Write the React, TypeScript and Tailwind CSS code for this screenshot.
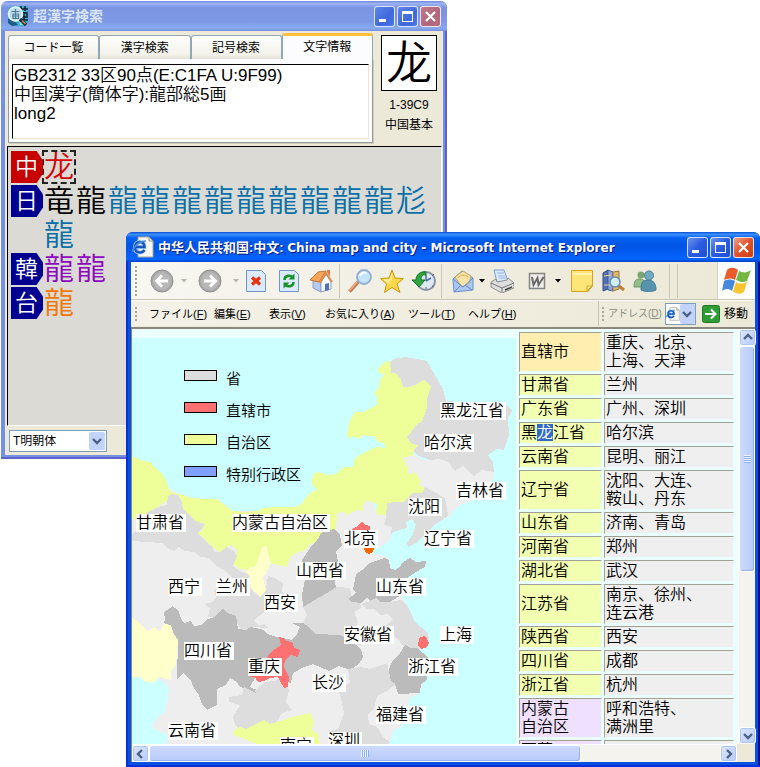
import type { ReactNode } from "react";

const fontJa = "[font-family:'Liberation_Sans','Noto_Sans_CJK_JP',sans-serif]";
const fontZh = "[font-family:'Liberation_Sans','Noto_Sans_CJK_SC',sans-serif]";

/* ---------- window chrome ---------- */

function CaptionButton({ label, tone, children }: { label: string; tone: string; children: ReactNode }) {
  return (
    <button aria-label={label} className={`flex h-[21px] w-[21px] items-center justify-center rounded-[3px] border border-white/80 ${tone}`}>
      <svg viewBox="0 0 19 19" className="h-[19px] w-[19px]" fill="none" stroke="#fff" shapeRendering="crispEdges">
        {children}
      </svg>
    </button>
  );
}

function CaptionButtons({ active }: { active: boolean }) {
  const blue = active ? "bg-[linear-gradient(135deg,#6f95f0,#2a5be0_50%,#1f4fd6)]" : "bg-[linear-gradient(135deg,#5f86e8,#3f68dd_60%,#4a78ea)]";
  const red = active ? "bg-[linear-gradient(135deg,#f0a088,#e0512b_50%,#c83c14)]" : "bg-[linear-gradient(135deg,#c07a8c,#b2667a_60%,#b86f80)]";
  return (
    <div className="flex gap-[2px]">
      <CaptionButton label="最小化" tone={blue}>
        <path d="M4 13.5h7" strokeWidth="3" />
      </CaptionButton>
      <CaptionButton label="最大化" tone={blue}>
        <path d="M4.500 5.500h10v9h-10z" />
        <path d="M4 5h11" strokeWidth="3" />
      </CaptionButton>
      <CaptionButton label="閉じる" tone={red}>
        <path d="M5 5l9 9M14 5l-9 9" strokeWidth="2.200" shapeRendering="auto" />
      </CaptionButton>
    </div>
  );
}

/* ---------- kanji search window ---------- */

function KanjiAppIcon() {
  return (
    <svg viewBox="0 0 22 22" className="h-[22px] w-[22px]" fill="none">
      <path d="M1 4l4-3h16v17l-5 3H5l-4-4z" fill="#3fa9c8" />
      <path d="M1 14l6 1 4 5-6 1-4-3z" fill="#1d5d86" />
      <path d="M14 1v5M18 1v5M12 4h9M13 8h7v4h-7zM17 7v8M12 15h9" stroke="#0e2230" strokeWidth="1.500" />
      <path d="M12 17h5v3h-4z" fill="#7fe0f0" />
      <circle cx="8.500" cy="9" r="7" fill="#bcdcea" stroke="#e8f4fa" strokeWidth="1.500" />
      <path d="M4.500 6.500h8M6 9h5.500v4.500H6zM8.500 4v9M5 11h7" stroke="#4a7d99" strokeWidth="1.100" />
      <path d="M13 14l6 6" stroke="#1d2a35" strokeWidth="3.200" />
      <path d="M15 15.500l3.500 3.500" stroke="#d98a50" strokeWidth="1.400" />
    </svg>
  );
}

const tabs = ["コード一覧", "漢字検索", "記号検索", "文字情報"];

function Tab({ label, selected }: { label: string; selected: boolean }) {
  return selected ? (
    <button role="tab" aria-selected="true" className="h-[26px] flex-1 rounded-t-[3px] border border-b-0 border-t-[3px] border-[#91a7b4] border-t-[#ffc03c] bg-[#fcfcfe] pb-[2px] text-[12px] leading-none">
      {label}
    </button>
  ) : (
    <button role="tab" aria-selected="false" className="h-6 flex-1 rounded-t-[3px] border border-b-0 border-[#91a7b4] bg-[linear-gradient(#fefefe,#f3f2ea_80%,#e5e2d6)] text-[12px] leading-none">
      {label}
    </button>
  );
}

const groups = [
  { region: "中", badge: "bg-[#c80000]", glyphs: [{ chars: "龙", tone: "text-[#d00808] outline-2 -outline-offset-1 outline-dashed outline-[#222]" }] },
  {
    region: "日",
    badge: "bg-[#000090]",
    glyphs: [
      { chars: "竜龍", tone: "text-black" },
      { chars: "龍龍龍龍龍龍龍龍龍尨龍", tone: "text-[#0870a8]" },
    ],
  },
  { region: "韓", badge: "bg-[#000090]", glyphs: [{ chars: "龍龍", tone: "text-[#8c08c0]" }] },
  { region: "台", badge: "bg-[#000090]", glyphs: [{ chars: "龍", tone: "text-[#f07808]" }] },
];

function KanjiWindow() {
  return (
    <section aria-label="超漢字検索" className={`absolute left-px top-px flex h-[458px] w-[446px] flex-col rounded-t-[7px] bg-[#7590e2] px-1 pb-1 shadow-[inset_-2px_-2px_0_#5f64cc] ${fontJa}`}>
      <header className="-mx-1 flex h-[30px] shrink-0 items-center rounded-t-[7px] bg-[linear-gradient(#6f86dc,#9db4f2_8%,#7b94e2_22%,#7d99e6_70%,#87abf0_90%,#7a90dc)] pl-[6px] pr-[6px]">
        <KanjiAppIcon />
        <h1 className="ml-1 flex-1 text-[14px] font-bold leading-none text-[#d8e4f8]">超漢字検索</h1>
        <CaptionButtons active={false} />
      </header>
      <div className="flex min-h-0 flex-1 flex-col bg-[#ece9d8]">
        <div className="flex h-[115px] shrink-0 gap-[7px] pl-[3px] pr-[5px] pt-[2px]">
          <div className="flex min-w-0 flex-1 flex-col">
            <div role="tablist" className="flex h-[26px] items-end">
              {tabs.map((t, i) => (
                <Tab key={t} label={t} selected={i === 3} />
              ))}
            </div>
            <div className="h-[84px] border border-t-0 border-[#919b9c] bg-[#fcfcfe] px-[3px] pt-[5px] shadow-[1px_1px_0_#d0cec0]">
              <textarea
                aria-label="文字情報"
                readOnly
                className="block h-[75px] w-full resize-none overflow-hidden border border-[#e8e4d0] border-l-black border-t-black bg-white pl-px pt-px text-[17px] font-[350] leading-[19px] outline-none"
                defaultValue={"GB2312 33区90点(E:C1FA U:9F99)\n中国漢字(簡体字):龍部総5画\nlong2"}
              />
            </div>
          </div>
          <div className="flex w-[58px] shrink-0 flex-col items-center pt-[2px] text-[12px]">
            <div className={`flex h-14 w-14 items-center justify-center border border-black bg-white text-[46px] font-[350] leading-none ${fontZh}`}>龙</div>
            <div className="mt-1 leading-5">1-39C9</div>
            <div className="leading-5">中国基本</div>
          </div>
        </div>
        <div className="mx-[2px] mr-px flex-1 border border-black border-b-white border-r-white bg-[#dcdad5] pl-[3px] pt-1">
          {groups.map((g) => (
            <div key={g.region} className="flex">
              <div className={`flex h-8 w-8 shrink-0 items-center pl-1 text-[23px] font-[350] leading-none text-white [clip-path:polygon(0_0,80%_0,100%_30%,100%_70%,80%_100%,0_100%)] ${g.badge}`}>{g.region}</div>
              <div className="flex flex-wrap">
                {g.glyphs.flatMap((set) =>
                  [...set.chars].map((c, i) => (
                    <span key={set.tone + i} className={`mb-[2px] flex h-8 w-8 items-center justify-center text-[30px] font-[350] leading-none ${set.tone}`}>
                      {c}
                    </span>
                  )),
                )}
              </div>
            </div>
          ))}
        </div>
        <div className="flex h-[29px] shrink-0 items-start pl-1 pt-1">
          <span className="relative flex">
            <select aria-label="書体" className="h-[22px] w-[98px] appearance-none border border-[#7f9db9] bg-white pl-[3px] text-[12px] leading-none">
              <option>T明朝体</option>
            </select>
            <span className="pointer-events-none absolute right-[2px] top-[2px] flex h-[18px] w-4 items-center justify-center rounded-[2px] bg-[#c2d4fc]">
              <Chevron dir="down" />
            </span>
          </span>
        </div>
      </div>
    </section>
  );
}

/* ---------- scroll bars ---------- */

function Chevron({ dir }: { dir: "up" | "down" | "left" | "right" }) {
  const paths = { up: "M1 6l4-4 4 4", down: "M1 3l4 4 4-4", left: "M6 1L2 5l4 4", right: "M3 1l4 4-4 4" };
  return (
    <svg viewBox="0 0 10 10" className="h-[10px] w-[10px]" fill="none" stroke="#4d6185" strokeWidth="2.400">
      <path d={paths[dir]} />
    </svg>
  );
}

function ScrollButton({ dir, label }: { dir: "up" | "down" | "left" | "right"; label: string }) {
  return (
    <button aria-label={label} className="flex h-[17px] w-[17px] shrink-0 items-center justify-center rounded-[3px] border border-white bg-[linear-gradient(135deg,#dce6fe,#b8ccfa)] shadow-[inset_0_0_0_1px_#b0c4f0]">
      <Chevron dir={dir} />
    </button>
  );
}

/* ---------- toolbar ---------- */

function Grip({ className }: { className: string }) {
  return <span className={`w-[2px] shrink-0 bg-[repeating-linear-gradient(#a8a698_0_2px,transparent_2px_4px)] ${className}`} />;
}

function Cell({ w, label, children }: { w: string; label: string; children: ReactNode }) {
  return (
    <button aria-label={label} className={`flex h-full shrink-0 items-center justify-center ${w}`}>
      <svg viewBox="0 0 24 24" className="h-6 w-6 shrink-0" fill="none">
        {children}
      </svg>
    </button>
  );
}

function Caret({ tone }: { tone: string }) {
  return (
    <svg viewBox="0 0 6 4" className={`h-1 w-[6px] shrink-0 ${tone}`} fill="currentColor">
      <path d="M0 0h6L3 3.500z" />
    </svg>
  );
}

function Sep() {
  return <span className="ml-[2px] mr-[5px] h-[34px] w-px shrink-0 bg-[#c9c5b2]" />;
}

function Page() {
  return <path d="M2.500 1.500h15l4 4v17h-19z" fill="#dceafd" stroke="#7295cc" />;
}

function Toolbar() {
  return (
    <div role="toolbar" aria-label="標準のボタン" className="flex h-[38px] shrink-0 border-b border-[#c8c4b0] bg-[linear-gradient(90deg,#f8f7f2,#f0ede0_50%,#ece9d8)]">
      <div className="flex flex-1 items-center overflow-hidden">
        <Grip className="ml-1 mr-[6px] h-[30px]" />
        <Cell w="w-[38px]" label="戻る">
          <circle cx="12" cy="12" r="11" fill="#a9a9a9" stroke="#929292" />
          <circle cx="12" cy="12" r="9" fill="#b8b8b8" />
          <path d="M18 12H8M12 6.500L6.500 12l5.500 5.500" stroke="#fff" strokeWidth="2.800" />
        </Cell>
        <Caret tone="text-[#b8b5a8]" />
        <Cell w="w-[46px]" label="進む">
          <circle cx="12" cy="12" r="11" fill="#a9a9a9" stroke="#929292" />
          <circle cx="12" cy="12" r="9" fill="#b8b8b8" />
          <path d="M6 12h10M12 6.500l5.500 5.500-5.500 5.500" stroke="#fff" strokeWidth="2.800" />
        </Cell>
        <Caret tone="text-[#b8b5a8]" />
        <Cell w="w-[34px]" label="中止">
          <Page />
          <path d="M8 8.500l8 7M16 8.500l-8 7" stroke="#e8320a" strokeWidth="3.200" />
        </Cell>
        <Cell w="w-8" label="更新">
          <Page />
          <path d="M7.500 11c0-5 6-5 8-3M16.500 13c0 5-6 5-8 3" stroke="#189228" strokeWidth="2.600" />
          <path d="M17.500 4.500v6h-6zM6.500 19.500v-6h6z" fill="#189228" />
        </Cell>
        <Cell w="w-8" label="ホーム">
          <path d="M4 11v8l8 4V13z" fill="#b4cbf2" stroke="#8ba0cb" />
          <path d="M12 13l5-8 5 8v7l-10 3z" fill="#f6f9fe" stroke="#8ba0cb" />
          <path d="M1 11l8-8 8-1-7 11z" fill="#f3a65a" stroke="#c5763a" />
          <path d="M11 14l6-10 6 9" stroke="#e08a48" strokeWidth="2" />
          <path d="M18 3V1h3v7" fill="#e07a48" />
          <path d="M16 15l4-1v7l-4 1z" fill="#4b72bb" />
        </Cell>
        <Sep />
        <Cell w="w-[30px]" label="検索">
          <path d="M1.500 22.500l9-10" stroke="#c47a52" strokeWidth="3.600" />
          <path d="M1.500 21.500l8-9" stroke="#eeb58d" strokeWidth="1.200" />
          <circle cx="16" cy="8" r="7" fill="#c5e5fb" stroke="#91add8" strokeWidth="1.800" />
          <path d="M12 7c1-3 4-4 6-3" stroke="#fff" strokeWidth="2" />
        </Cell>
        <Cell w="w-[34px]" label="お気に入り">
          <path d="M12 1l3 8 8.500.5-6.500 5.500 3 8.500-8-5-7.500 5 2-8.500L.5 9.500 9 9z" fill="#fcd748" stroke="#c6960c" />
          <path d="M12 5l-1 6-6 0 5 3" stroke="#fff6b8" strokeWidth="1.200" />
        </Cell>
        <Cell w="w-[30px]" label="履歴">
          <circle cx="14" cy="12" r="9" fill="#dfe7ef" stroke="#8793a4" strokeWidth="2" />
          <path d="M14 12V6M14 12l5-3" stroke="#4671ad" strokeWidth="1.500" />
          <path d="M22 5l-2 2M22 18l-2-1M14 20v-2" stroke="#667" />
          <path d="M14 3C8 2 4 6 4 11H0l7 7 6-7H9c0-4 2-6 5-5z" fill="#31a33f" stroke="#16772b" />
        </Cell>
        <Sep />
        <Cell w="w-8" label="メール">
          <path d="M2 10l9-8 11 7v12L3 23z" fill="#a8c9f2" stroke="#698dce" />
          <path d="M4 8l8-6 8 5-2 7-7 4z" fill="#f8e4a8" stroke="#c5a35c" />
          <path d="M7 9c3-4 7-3 10-1" stroke="#dba546" />
          <path d="M2 10l10 8 10-9M3 23l7-7M21 21l-7-5" stroke="#678acb" />
        </Cell>
        <Caret tone="text-black" />
        <Cell w="w-[34px]" label="印刷">
          <path d="M4 1h10l4 11-11 1z" fill="#dae9fc" stroke="#7b9ed6" />
          <path d="M7 4h7M8 7h7M9 9h7" stroke="#96b4e0" />
          <path d="M1 13l5-3 1 3 10-2 1-2 6 5v5l-12 5-11-6z" fill="#dedede" stroke="#8e8e8e" />
          <path d="M1 14l11 5 12-5M12 19v4" stroke="#777" />
          <path d="M15 21l7-3" stroke="#444" strokeWidth="1.500" />
        </Cell>
        <Cell w="w-9" label="編集">
          <path d="M4.500 4.500h15v15h-15z" fill="#eeeeec" stroke="#858585" strokeWidth="1.500" />
          <path d="M7 8l1.500 8 4-7 1 7 5-8" stroke="#696969" strokeWidth="2" />
        </Cell>
        <Caret tone="text-black" />
        <Cell w="w-[42px]" label="ディスカッション">
          <path d="M1.500 1.500h21v16l-5 5h-16z" fill="#ffe577" stroke="#d5a31c" />
          <path d="M2 5h20" stroke="#fff2ad" strokeWidth="2" />
          <path d="M17 22v-5h5z" fill="#fff5b8" stroke="#d5a31c" />
        </Cell>
        <Cell w="w-5" label="リサーチ">
          <path d="M2 4l5-3v19l-5 2z" fill="#5371b6" stroke="#364e87" />
          <path d="M7 1l5 2v19l-5-1z" fill="#90a6da" stroke="#4d659d" />
          <path d="M12 3l6-1v18l-6 2z" fill="#dcb968" stroke="#98773e" />
          <path d="M3 7l7-1M3 16l6 0" stroke="#eed489" />
          <circle cx="14" cy="13" r="5" fill="#d2f0fc" stroke="#678db9" strokeWidth="1.500" />
          <path d="M18 17l5 4" stroke="#c17d36" strokeWidth="3" />
        </Cell>
        <Cell w="w-11" label="Messenger">
          <path d="M1 18c0-7 2-8 6-8s6 3 6 8z" fill="#92bd87" stroke="#6c9968" />
          <circle cx="8" cy="6" r="3.500" fill="#78a672" />
          <path d="M8 21c0-8 2-10 7-10s8 3 8 10c-4 2-11 2-15 0z" fill="#5893ae" stroke="#437c97" />
          <circle cx="16" cy="6.500" r="4.500" fill="#6eabc0" stroke="#467f98" />
        </Cell>
        <Sep />
        <Sep />
      </div>
      <div className="flex w-[38px] shrink-0 items-center justify-center border-l border-[#d8d4c4] bg-white">
        <svg viewBox="0 0 30 28" className="h-7 w-[30px]">
          <path d="M5 3c3-3 7-3 11 0l-3 10c-3-2-7-2-11 0z" fill="#ea5b2c" />
          <path d="M17 4c4 2 8 2 12-1l-4 11c-4 2-7 1-11-1z" fill="#74b843" />
          <path d="M2 14c4-2 7-2 11 0l-3 10c-4-3-7-2-10 0z" fill="#4487dc" />
          <path d="M14 15c3 2 7 2 11 0l-3 10c-4 3-8 2-11-1z" fill="#f8c531" />
        </svg>
      </div>
    </div>
  );
}

function IeGlyph({ className }: { className: string }) {
  return (
    <svg viewBox="0 0 22 22" className={className} fill="none">
      <path d="M6 1h11l4 4v16H6z" fill="#f7f7ef" stroke="#a7a799" />
      <path d="M17 1v4h4" stroke="#8c8c80" />
      <path d="M3.500 11h9c0-3-1.500-5-4.500-5s-5 2-5 5.500 2 5 5 5c2 0 3.500-1 4.500-2.500" stroke="#a8d0ff" strokeWidth="4" />
      <path d="M3.500 11h9c0-3-1.500-5-4.500-5s-5 2-5 5.500 2 5 5 5c2 0 3.500-1 4.500-2.500" stroke="#1656b8" strokeWidth="2.400" />
      <path d="M1 16c-1-4 6-11 13-11" stroke="#4f8fe0" strokeWidth="1.500" />
    </svg>
  );
}

const menus = [
  { name: "ファイル", accel: "F", width: "w-[65px]" },
  { name: "編集", accel: "E", width: "w-[55px]" },
  { name: "表示", accel: "V", width: "w-[56px]" },
  { name: "お気に入り", accel: "A", width: "w-[83px]" },
  { name: "ツール", accel: "T", width: "w-[60px]" },
  { name: "ヘルプ", accel: "H", width: "w-[60px]" },
];

function MenuBar() {
  return (
    <div className="flex h-[26px] shrink-0 items-center border-t border-white bg-[linear-gradient(90deg,#f4f2e8,#ece9d8)] text-[11px] leading-4">
      <nav aria-label="メニュー" className="flex flex-1 items-center overflow-hidden whitespace-nowrap">
        <Grip className="ml-1 mr-3 h-[14px]" />
        {menus.map((m) => (
          <button key={m.accel} className={`shrink-0 text-left ${m.width}`}>
            {m.name}(<u>{m.accel}</u>)
          </button>
        ))}
      </nav>
      <div className="flex h-full shrink-0 items-center border-l border-[#c9c5b2]">
        <Grip className="ml-[3px] mr-1 h-[14px]" />
        <label htmlFor="address" className="w-[57px] whitespace-nowrap text-[10px] text-[#8b897c]">
          アドレス(<u>D</u>)
        </label>
        <span className="relative flex">
          <select id="address" className="h-[22px] w-[31px] appearance-none border border-[#7f9db9] bg-white" />
          <IeGlyph className="pointer-events-none absolute left-px top-1 h-[14px] w-[14px]" />
          <span className="pointer-events-none absolute right-px top-px flex h-5 w-[15px] items-center justify-center rounded-[2px] bg-[#c2d4fc]">
            <Chevron dir="down" />
          </span>
        </span>
        <button className="ml-[6px] mr-[7px] flex items-center gap-1 text-[12px]">
          <svg viewBox="0 0 18 18" className="h-[18px] w-[18px]" fill="none">
            <rect x=".5" y=".5" width="17" height="17" rx="2" fill="#2f9c36" stroke="#1d7925" />
            <path d="M3 9h10M9 4.500L13.500 9 9 13.500" stroke="#fff" strokeWidth="2" />
          </svg>
          移動
        </button>
      </div>
    </div>
  );
}

/* ---------- map ---------- */

const regions = [
  { fill: "#eeeeee", d: "132,470 180,494 233,511 300,512 340,510 357,508 365,501 373,502 376,512 390,515 396,528 391,534 390,540 384,545 374,549 371,553 388,557 392,570 400,590 407,605 415,622 427,632 429,637 427,647 417,648 428,657 428,668 424,680 420,693 410,698 408,706 402,712 401,727 394,730 390,742 388,744 166,744 168,735 153,728 153,724 158,717 165,712 169,690 166,684 158,678 152,683 140,677 132,677" },
  { fill: "#dddddd", d: "390,362 393,359 405,357 417,359 427,361 435,375 443,389 446,401 460,402 470,408 503,408 507,405 512,411 508,418 509,435 504,450 497,449 488,455 493,462 494,472 482,470 474,476 463,466 455,471 448,462 440,459 430,460 418,456 405,440 400,400 388,374" },
  { fill: "#eeeeee", d: "403,457 412,453 424,460 430,460 440,459 448,462 455,471 463,466 474,476 482,470 494,472 493,480 485,485 478,492 470,502 462,504 454,510 449,518 438,508 420,490 408,473" },
  { fill: "#eeff99", d: "132,457 137,458 143,461 151,462 155,468 162,473 167,482 168,487 171,492 178,494 193,498 205,499 217,499 225,505 233,511 245,512 258,511 263,508 275,507 287,507 295,507 303,503 304,499 307,497 310,493 317,490 312,484 312,480 314,474 318,472 322,473 327,475 332,475 337,473 340,470 345,467 353,467 355,458 362,454 370,450 377,447 385,448 385,444 377,441 374,436 367,436 363,435 360,439 352,436 349,439 347,433 350,420 355,412 363,412 377,405 377,397 374,394 379,387 380,380 384,375 378,372 378,369 383,363 390,361 391,373 396,373 401,380 403,387 410,387 415,385 424,380 431,387 427,399 427,408 424,416 422,422 418,423 407,437 412,444 418,445 414,449 413,456 403,457 408,468 408,474 416,473 421,481 419,485 425,488 422,493 413,493 403,502 395,507 387,515 378,515 376,511 378,505 373,502 366,501 363,505 363,511 357,510 347,515 343,512 337,513 336,530 326,532 321,541 310,544 306,550 299,552 290,557 287,567 279,565 270,563 262,572 240,569 233,564 233,557 238,551 231,545 227,547 220,552 214,548 212,547 200,535 197,533 203,530 203,525 205,523 190,522 182,507 171,497 152,512 132,520" },
  { fill: "#dddddd", d: "168,496 172,494 178,495 182,502 183,509 187,513 195,521 205,524 203,528 197,533 202,537 207,543 213,547 214,552 220,552 227,547 234,551 237,556 233,566 240,571 248,574 252,583 253,592 260,597 264,594 266,588 268,576 275,578 283,583 282,592 287,596 282,606 271,607 263,613 254,620 259,626 264,624 268,628 253,627 249,630 242,630 238,626 236,616 227,614 223,609 217,617 208,617 210,608 204,604 213,602 216,597 214,590 222,586 221,582 232,578 226,571 217,566 208,558 201,557 194,552 185,551 179,547 174,551 168,549 163,543 132,541 132,535 141,525 146,513 158,507 167,505" },
  { fill: "#bbbbbb", d: "317,540 322,532 334,529 340,535 342,545 336,551 338,562 334,570 336,590 320,597 303,607 302,594 305,580 302,560 310,548" },
  { fill: "#dddddd", d: "303,607 320,597 337,587 350,588 352,600 360,602 361,608 354,612 358,622 354,629 360,638 361,646 340,637 315,634 303,623 307,615" },
  { fill: "#bbbbbb", d: "353,590 356,574 365,568 369,563 385,558 389,560 390,568 395,570 400,567 403,562 410,558 416,562 426,561 425,567 416,572 407,578 400,588 400,596 390,602 380,602 376,598 370,601 367,597 362,603 352,602 348,599 356,593" },
  { fill: "#dddddd", d: "362,604 370,601 376,598 380,602 390,602 401,600 407,605 411,613 415,622 427,632 429,637 427,647 417,650 405,648 395,636 385,626 393,620 388,614 380,615 375,609 366,609" },
  { fill: "#bbbbbb", d: "163,622 165,620 164,612 170,608 172,606 178,610 181,618 184,623 191,621 194,626 202,625 206,620 214,617 223,608 227,613 236,616 238,629 246,630 251,627 264,630 267,634 277,637 292,640 297,634 300,627 292,623 303,623 309,627 315,634 340,635 350,640 361,649 363,657 359,664 350,670 339,666 329,671 320,667 313,664 304,667 293,673 291,683 280,680 270,670 263,672 255,678 250,687 257,690 256,693 247,690 239,686 237,682 230,678 226,685 217,689 217,705 207,710 202,705 199,695 194,688 191,681 183,673 177,679 178,640 170,629" },
  { fill: "#dddddd", d: "229,697 242,695 244,687 256,693 255,690 265,682 280,680 289,690 286,702 292,710 282,713 276,723 266,724 258,732 245,735 235,725 233,717 240,705 229,702" },
  { fill: "#bbbbbb", d: "405,645 411,648 417,648 428,657 427,680 421,684 420,693 398,694 395,684 391,681 388,671 393,660 399,655" },
  { fill: "#dddddd", d: "361,667 370,669 387,663 391,681 396,684 387,691 377,696 374,708 368,715 369,724 377,727 384,738 390,742 389,744 329,744 330,731 338,729 341,721 344,714 341,698 338,690 350,683 348,669" },
  { fill: "#eeff99", d: "233,731 240,727 246,729 264,720 270,724 281,721 289,718 301,715 311,713 314,722 312,730 318,734 320,744 257,744 242,738 234,735" },
  { fill: "#ffffcc", d: "132,618 139,622 147,631 155,627 159,632 164,624 171,625 174,634 178,640 176,665 171,671 171,680 159,677 154,683 146,682 140,677 132,677" },
  { fill: "#ffffcc", d: "259,557 262,547 267,546 268,553 271,563 266,573 263,578 266,590 260,597 255,592 250,588 250,577 245,572 251,567 256,566" },
  { fill: "#ff7070", d: "279,637 283,638 287,641 293,643 294,648 300,650 298,657 291,655 285,660 284,667 289,677 288,687 284,688 280,681 278,677 270,678 264,681 258,682 255,677 250,677 248,665 253,658 265,660 272,651 281,645" },
  { fill: "#dddddd", d: "387,503 394,502 403,502 413,493 422,493 425,487 434,492 445,498 447,508 448,516 433,526 416,543 408,547 407,543 413,534 416,525 412,519 406,522 407,528 396,531 391,534 392,527 384,525 386,517" },
  { fill: "#ff7070", d: "352,529 356,527 359,524 362,522 365,525 370,526 370,531 353,531" },
  { fill: "#ff7070", d: "419,638 424,636 427,639 429,643 427,647 421,649 418,646" },
  { fill: "#ff6600", d: "364,548 374,548 373,552 369,554 365,552" },
];

const legend = [
  { label: "省", tone: "bg-[#dddddd]" },
  { label: "直辖市", tone: "bg-[#ff7070]" },
  { label: "自治区", tone: "bg-[#eeff99]" },
  { label: "特别行政区", tone: "bg-[#80a0ff]" },
];

const places: [string, number, number][] = [
  ["黑龙江省", 308, 64],
  ["哈尔滨", 292, 96],
  ["吉林省", 324, 144],
  ["沈阳", 276, 160],
  ["辽宁省", 292, 192],
  ["北京", 212, 192],
  ["甘肃省", 4, 176],
  ["内蒙古自治区", 100, 176],
  ["山西省", 164, 224],
  ["山东省", 244, 240],
  ["西宁", 36, 240],
  ["兰州", 84, 240],
  ["西安", 132, 256],
  ["安徽省", 212, 288],
  ["上海", 308, 288],
  ["四川省", 52, 304],
  ["重庆", 116, 320],
  ["浙江省", 276, 320],
  ["长沙", 180, 336],
  ["福建省", 244, 368],
  ["云南省", 36, 384],
  ["南宁", 148, 399],
  ["深圳", 196, 394],
];

function ChinaMap() {
  return (
    <div className="relative mt-[9px] h-[406px] w-[384px] shrink-0 overflow-hidden bg-[#ccffff] font-[350]">
      <svg viewBox="132 338 384 406" className="absolute inset-0 h-full w-full" shapeRendering="crispEdges">
        {regions.map((r) => (
          <polygon key={r.d} points={r.d} fill={r.fill} />
        ))}
      </svg>
      <ul className="relative flex flex-col gap-3 pl-[52px] pt-[28px]">
        {legend.map((l) => (
          <li key={l.label} className="flex h-5 gap-[9px] text-[15px] leading-[26px]">
            <span className={`mt-1 h-[11px] w-[33px] border border-black ${l.tone}`} />
            {l.label}
          </li>
        ))}
      </ul>
      {places.map(([name, left, top]) => (
        <span key={name} className="absolute whitespace-nowrap bg-white pr-[2px] text-[16px] leading-[18px]" style={{ left, top }}>
          {name}
        </span>
      ))}
    </div>
  );
}

/* ---------- city table ---------- */

const muni = "bg-[#ffeeb0]";
const prov = "bg-[#f2ffb0]";
const auto = "bg-[#f0e0ff]";

const rows: { name: ReactNode; tone: string; cities: string[] }[] = [
  { name: "直辖市", tone: muni, cities: ["重庆、北京、", "上海、天津"] },
  { name: "甘肃省", tone: prov, cities: ["兰州"] },
  { name: "广东省", tone: prov, cities: ["广州、深圳"] },
  { name: <>黑<mark className="bg-[#316ac5] text-white">龙</mark>江省</>, tone: prov, cities: ["哈尔滨"] },
  { name: "云南省", tone: prov, cities: ["昆明、丽江"] },
  { name: "辽宁省", tone: prov, cities: ["沈阳、大连、", "鞍山、丹东"] },
  { name: "山东省", tone: prov, cities: ["济南、青岛"] },
  { name: "河南省", tone: prov, cities: ["郑州"] },
  { name: "湖北省", tone: prov, cities: ["武汉"] },
  { name: "江苏省", tone: prov, cities: ["南京、徐州、", "连云港"] },
  { name: "陕西省", tone: prov, cities: ["西安"] },
  { name: "四川省", tone: prov, cities: ["成都"] },
  { name: "浙江省", tone: prov, cities: ["杭州"] },
  { name: <>内蒙古<br />自治区</>, tone: auto, cities: ["呼和浩特、", "满洲里"] },
  { name: "西藏", tone: auto, cities: [] },
];

function CityTable() {
  return (
    <table className="mt-px w-[219px] shrink-0 table-fixed border-separate border-spacing-[2px] self-start text-[16px] font-[350] leading-[18px]">
      <colgroup>
        <col className="w-[83px]" />
        <col />
      </colgroup>
      <tbody>
        {rows.map((r, i) => (
          <tr key={i}>
            <th scope="row" className={`border border-[#e8ffff] border-l-[#a0a094] border-t-[#a0a094] p-px text-left font-[350] ${r.tone}`}>
              {r.name}
            </th>
            <td className="border border-[#e8ffff] border-l-[#a0a094] border-t-[#a0a094] bg-[#efefef] p-px">
              {r.cities.map((c) => (
                <div key={c}>{c}</div>
              ))}
            </td>
          </tr>
        ))}
      </tbody>
    </table>
  );
}

/* ---------- browser window ---------- */

function BrowserWindow() {
  return (
    <section aria-label="Microsoft Internet Explorer" className={`absolute left-[126px] right-0 top-[232px] flex h-[535px] flex-col rounded-t-[7px] bg-[#0a50e0] px-[5px] pb-[5px] shadow-[inset_2px_-2px_0_#0831d9,inset_-2px_-2px_0_#00138c] ${fontJa}`}>
      <header className="-mx-[5px] flex h-[30px] shrink-0 items-center rounded-t-[7px] bg-[linear-gradient(#0a50d0,#3c90ff_8%,#0560f0_20%,#0055e5_50%,#0460fa_80%,#0566ff_90%,#0040c8)] pl-[6px] pr-[6px]">
        <IeGlyph className="h-[22px] w-[22px]" />
        <h1 className={`ml-1 flex-1 truncate pt-[2px] text-[13px] font-bold leading-5 text-white [text-shadow:1px_1px_0_#0a1883] ${fontZh}`}>
          中华人民共和国:中文: <span className="text-[12px] [font-family:'DejaVu_Sans',sans-serif]">China map and city - Microsoft Internet Explorer</span>
        </h1>
        <CaptionButtons active />
      </header>
      <div className="flex min-h-0 flex-1 flex-col bg-[#ece9d8]">
        <Toolbar />
        <MenuBar />
        <div className="mt-px flex min-h-0 flex-1 flex-col border-l border-t-2 border-[#8a887c]">
          <div className="flex min-h-0 flex-1">
            <div className={`flex min-w-0 flex-1 gap-px overflow-hidden bg-[#ebffff] ${fontZh}`}>
              <ChinaMap />
              <CityTable />
            </div>
            <div className="flex w-[17px] shrink-0 flex-col border-l border-white bg-[#f4f3ee]">
              <ScrollButton dir="up" label="上へスクロール" />
              <div className="flex h-[226px] items-center justify-center rounded-[3px] border border-white bg-[linear-gradient(90deg,#cbdafe,#bacbfa)] shadow-[inset_-1px_-1px_0_#98b0e8]">
                <span className="h-2 w-[7px] bg-[repeating-linear-gradient(#eef4fe_0_1px,#8cb0f8_1px_2px)]" />
              </div>
              <div className="flex-1" />
              <ScrollButton dir="down" label="下へスクロール" />
            </div>
          </div>
          <div className="flex h-[18px] shrink-0 pr-[18px]">
            <div className="flex flex-1 border-t border-white bg-[#f4f3ee]">
              <ScrollButton dir="left" label="左へスクロール" />
              <div className="flex h-[17px] w-[432px] items-center justify-center rounded-[3px] border border-white bg-[linear-gradient(#cbdafe,#bacbfa)] shadow-[inset_-1px_-1px_0_#98b0e8]">
                <span className="h-[7px] w-2 bg-[repeating-linear-gradient(90deg,#eef4fe_0_1px,#8cb0f8_1px_2px)]" />
              </div>
              <div className="flex-1" />
              <ScrollButton dir="right" label="右へスクロール" />
            </div>
          </div>
        </div>
      </div>
    </section>
  );
}

export default function App() {
  return (
    <main className="relative min-h-screen min-w-[760px] overflow-hidden bg-white text-black">
      <KanjiWindow />
      <BrowserWindow />
    </main>
  );
}
